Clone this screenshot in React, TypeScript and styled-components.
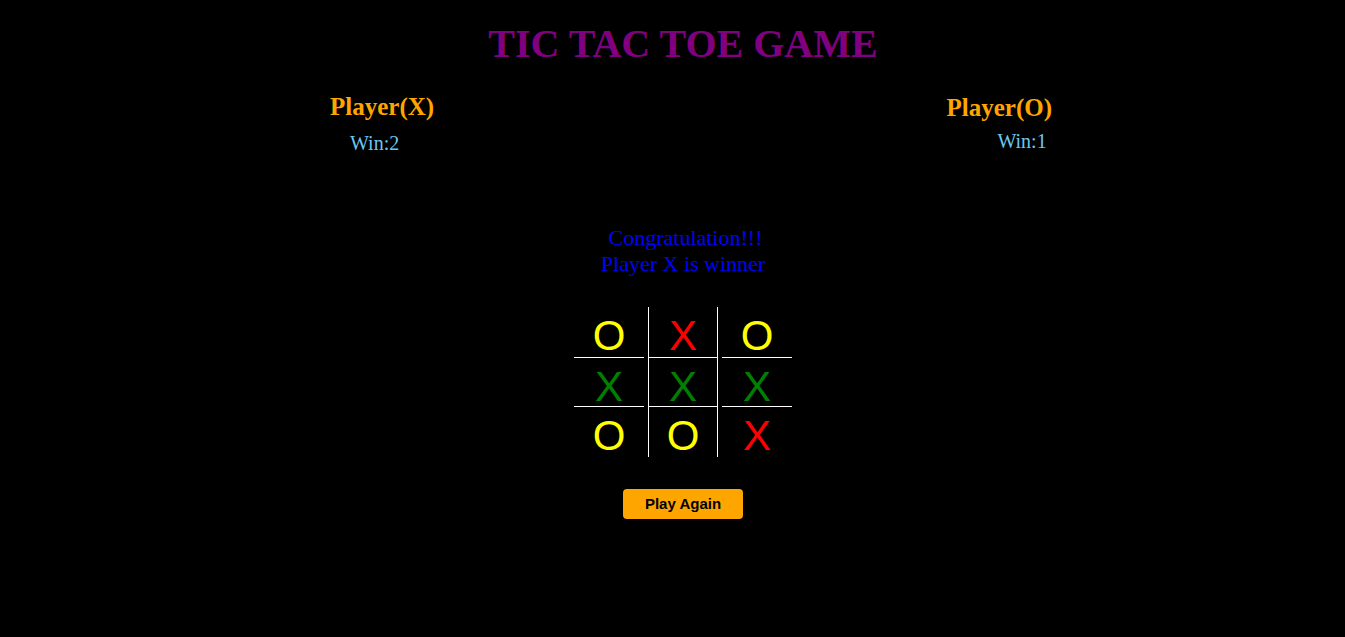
import React from "react";
import styled, { createGlobalStyle } from "styled-components";

const GlobalStyle = createGlobalStyle`
  html, body {
    margin: 0;
    padding: 0;
    background: #000000;
  }
  body {
    font-family: "Liberation Serif", "Times New Roman", serif;
  }
`;

const Page = styled.div`
  min-height: 637px;
  background: #000000;
  padding-left: 21px;
  display: flex;
  flex-direction: column;
  align-items: center;
`;

const Title = styled.h1`
  margin: 20px 0 0;
  font-family: "Liberation Serif", serif;
  font-size: 40px;
  font-weight: bold;
  line-height: normal;
  color: #800080;
`;

const ScoreRow = styled.div`
  align-self: stretch;
  display: flex;
  justify-content: space-between;
  padding: 0 293px 0 309px;
`;

const PlayerCard = styled.div<{ $top: number }>`
  display: flex;
  flex-direction: column;
  align-items: flex-start;
  margin-top: ${(p) => p.$top}px;
`;

const PlayerName = styled.h2`
  margin: 0;
  font-family: "Liberation Serif", serif;
  font-size: 25px;
  font-weight: bold;
  line-height: normal;
  color: #ffa500;
`;

const WinCount = styled.div<{ $indent: number; $gap: number }>`
  margin: ${(p) => p.$gap}px 0 0 ${(p) => p.$indent}px;
  font-family: "Liberation Serif", serif;
  font-size: 20px;
  line-height: normal;
  color: #6cc7f0;
`;

const Message = styled.div`
  margin-top: 70px;
  display: flex;
  flex-direction: column;
  align-items: center;
  font-family: "Liberation Serif", serif;
  font-size: 22px;
  line-height: 26px;
  color: #0000ff;
`;

const MessageLine = styled.div<{ $shift?: number }>`
  padding-left: ${(p) => p.$shift ?? 0}px;
`;

const Board = styled.div`
  margin-top: 30px;
  display: grid;
  grid-template-columns: repeat(3, 70px);
  grid-template-rows: 51px 49px 50px;
  column-gap: 4px;
`;

const Cell = styled.div<{ $middle: boolean; $lastRow: boolean; $color: string }>`
  box-sizing: border-box;
  padding-top: 5px;
  text-align: center;
  font-family: "Liberation Sans", Arial, sans-serif;
  font-size: 42px;
  line-height: 1.15;
  color: ${(p) => p.$color};
  border-bottom: ${(p) => (p.$lastRow ? "none" : "1px solid #ffffff")};
  border-left: ${(p) => (p.$middle ? "1px solid #ffffff" : "none")};
  border-right: ${(p) => (p.$middle ? "1px solid #ffffff" : "none")};
`;

const PlayAgain = styled.button`
  margin-top: 32px;
  width: 120px;
  height: 30px;
  border: none;
  border-radius: 4px;
  background: #ffa500;
  color: #000000;
  font-family: "Liberation Sans", Arial, sans-serif;
  font-size: 15px;
  font-weight: bold;
  cursor: pointer;
  padding: 0 0 2px;
`;

const board = ["O", "X", "O", "X", "X", "X", "O", "O", "X"];
const winning = [3, 4, 5];

const colorFor = (v: string, i: number) => {
  if (winning.includes(i)) return "#008000";
  return v === "X" ? "#ff0000" : "#ffff00";
};

export default function App() {
  return (
    <>
      <GlobalStyle />
      <Page>
        <Title>TIC TAC TOE GAME</Title>
        <ScoreRow>
          <PlayerCard $top={26}>
            <PlayerName>Player(X)</PlayerName>
            <WinCount $indent={20} $gap={11}>Win:2</WinCount>
          </PlayerCard>
          <PlayerCard $top={27}>
            <PlayerName>Player(O)</PlayerName>
            <WinCount $indent={51} $gap={8}>Win:1</WinCount>
          </PlayerCard>
        </ScoreRow>
        <Message>
          <MessageLine $shift={5}>Congratulation!!!</MessageLine>
          <MessageLine>Player X is winner</MessageLine>
        </Message>
        <Board>
          {board.map((v, i) => (
            <Cell
              key={i}
              $middle={i % 3 === 1}
              $lastRow={i >= 6}
              $color={colorFor(v, i)}
            >
              {v}
            </Cell>
          ))}
        </Board>
        <PlayAgain>Play Again</PlayAgain>
      </Page>
    </>
  );
}
